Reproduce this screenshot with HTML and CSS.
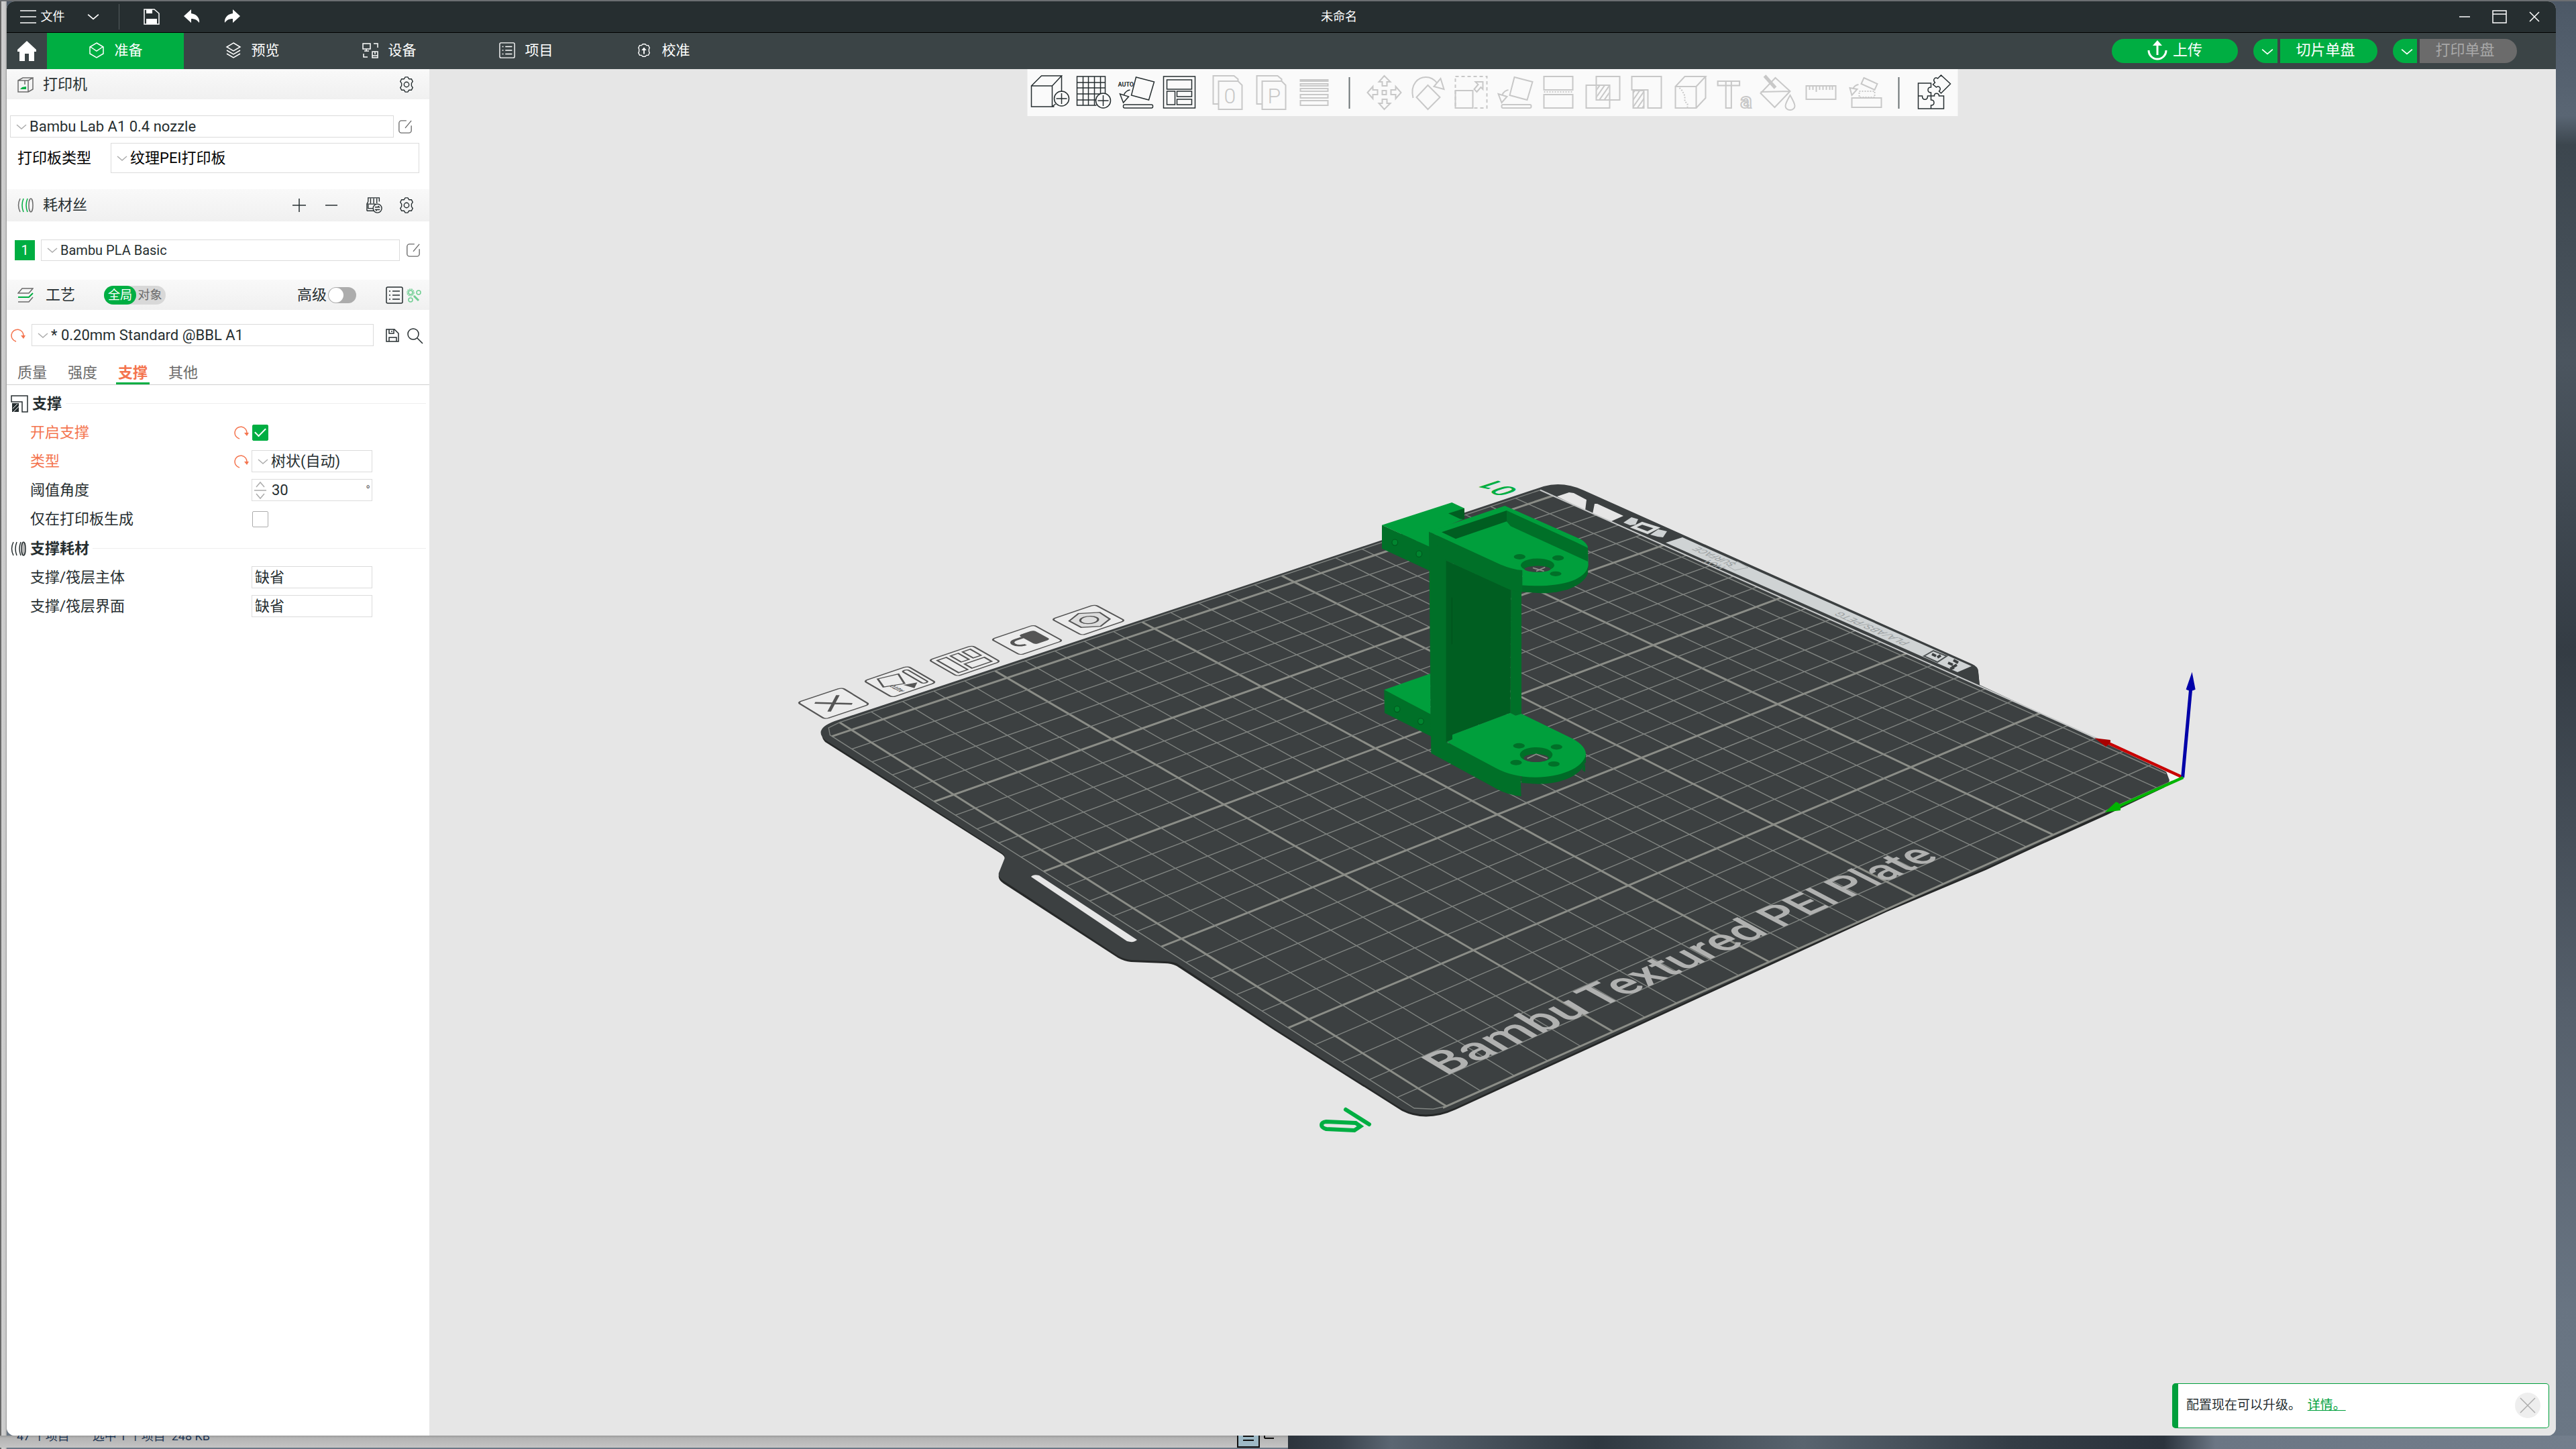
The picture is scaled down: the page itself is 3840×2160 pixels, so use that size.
FILE: index.html
```html
<!DOCTYPE html>
<html lang="zh-CN">
<head>
  <meta charset="UTF-8" />
  <meta name="viewport" content="width=device-width, initial-scale=1.0"/>
  <title>未命名</title>
  <link rel="stylesheet" href="styles.css">
</head>
<body>

  <!-- shared icons -->
  <svg class="defs" aria-hidden="true">
    <symbol id="i-down" viewBox="0 0 16 10"><path d="M1 2l7 6 7-6"/></symbol>
    <symbol id="i-gear" viewBox="0 0 26 26"><path d="M9 4l2-3h4l2 3 4 0 2 4-2 3v4l2 3-2 4-4 0-2 3h-4l-2-3-4 0-2-4 2-3v-4l-2-3 2-4z"/><circle cx="13" cy="13" r="4"/></symbol>
    <symbol id="i-edit" viewBox="0 0 24 24"><path d="M14 2H6a4 4 0 0 0-4 4v12a4 4 0 0 0 4 4h12a4 4 0 0 0 4-4v-8M22 2L12 14"/></symbol>
    <symbol id="i-reset" viewBox="0 0 22 22"><path d="M8 20A9 9 0 1 1 19 12"/><path class="solid" d="M15 11h7l-3 5z"/></symbol>
    <symbol id="i-list" viewBox="0 0 26 26"><rect x="1" y="1" width="24" height="24" rx="2"/><path d="M5 7h2M10 7h11M5 13h2M10 13h11M5 19h2M10 19h11"/></symbol>
    <symbol id="i-lay" viewBox="0 0 65 70"><path d="M31 12l27 7-8 27-26-7zM7 37l13 4-8 9zM22 31q-6 1-9 7"/><rect x="12" y="53" width="44" height="5" rx="2"/></symbol>
    <pattern id="hatch" width="6" height="6" patternUnits="userSpaceOnUse" patternTransform="rotate(35)"><path d="M1 0v6" stroke="#c8c8c8" stroke-width="2"/></pattern>
  </svg>

  <div class="window">
    <header class="titlebar">
      <button class="file"><svg class="icon" viewBox="0 0 24 24" stroke-width="2"><path d="M0 3h24M0 12h24M0 21h24"/></svg>文件</button>
      <button class="file-more" aria-label="更多"><svg class="icon small" stroke-width="2"><use href="#i-down"/></svg></button>
      <div class="quick">
        <button aria-label="保存"><svg class="icon" viewBox="0 0 24 24" stroke-width="2"><path d="M1 1h15l7 6v16H1z"/><path class="solid" d="M4 1h9v6H4zM4 15h16v8H4z"/></svg></button>
        <button aria-label="撤销"><svg class="icon" viewBox="0 0 24 24"><path class="solid" d="M0 11L11 1v6c9 1 13 8 12 14-3-4-6-6-12-6v6z"/></svg></button>
        <button aria-label="重做"><svg class="icon" viewBox="0 0 24 24"><path class="solid" d="M24 11L13 1v6C4 8 0 15 1 21c3-4 6-6 12-6v6z"/></svg></button>
      </div>
      <h1>未命名</h1>
      <div class="win-buttons">
        <button aria-label="最小化"><svg class="icon" viewBox="0 0 24 24"><path d="M4 12h16"/></svg></button>
        <button aria-label="最大化"><svg class="icon" viewBox="0 0 24 24" stroke-width="2"><path d="M2 3h20v18H2zM2 8h20"/></svg></button>
        <button aria-label="关闭"><svg class="icon" viewBox="0 0 24 24"><path d="M5 5l14 14M19 5L5 19"/></svg></button>
      </div>
    </header>

    <nav class="tabs">
      <a class="home" href="#home" aria-label="主页"><svg viewBox="0 0 30 30"><path class="solid" d="M15 0l14 13v3h-3v14h-8V19h-6v11H4V16H1v-3z"/></svg></a>
      <a class="tab active" href="#prepare"><svg class="icon" viewBox="0 0 24 24"><path d="M12 1l10 6v10l-10 6-10-6V7zM3 7l9 6 9-6"/></svg>准备</a>
      <a class="tab" href="#preview"><svg class="icon" viewBox="0 0 24 24"><path d="M12 1l10 6-10 6L2 7zM2 12l10 6 10-6M2 17l10 6 10-6"/></svg>预览</a>
      <a class="tab" href="#device"><svg class="icon" viewBox="0 0 24 24"><path d="M1 2h11v8H1zM6 10v3M3 13h7M17 2h6v6M2 17v5h6M15 14h8v9h-8zM19 14v4M15 20h8"/></svg>设备</a>
      <a class="tab" href="#project"><svg class="icon"><use href="#i-list"/></svg>项目</a>
      <a class="tab" href="#calibrate"><svg class="icon" viewBox="0 0 26 26"><path d="M9 5l2-2h4l2 2h3l2 4-1 2v4l1 2-2 4h-3l-2 2h-4l-2-2H6l-2-4 1-2v-4L4 9l2-4z"/><path class="solid" d="M12 19v-6H9l4-5 4 5h-3v6z"/></svg>校准</a>
      <div class="actions">
        <button class="upload"><svg viewBox="0 0 30 30" fill="none" stroke="currentColor" stroke-width="3"><path d="M2 15a13 13 0 0 0 26 0M15 22V6"/><path class="solid" stroke="none" d="M8 8l7-8 7 8z"/></svg>上传</button>
        <div class="split">
          <button class="caret" aria-label="切片选项"><svg class="icon small" stroke-width="2"><use href="#i-down"/></svg></button>
          <button class="main">切片单盘</button>
        </div>
        <div class="split">
          <button class="caret" aria-label="打印选项"><svg class="icon small" stroke-width="2"><use href="#i-down"/></svg></button>
          <button class="main" disabled>打印单盘</button>
        </div>
      </div>
    </nav>

    <div class="content">
      <aside class="sidebar">
        <div class="head">
          <svg class="icon" viewBox="0 0 24 24"><path d="M1 6h15v17H1zM1 6l7-4h15l-7 4M23 2v17l-7 4M11 6v6"/><path class="green" d="M4 19h9v-4l-6 1z"/></svg>
          <h2>打印机</h2>
          <button class="push" aria-label="打印机设置"><svg class="icon"><use href="#i-gear"/></svg></button>
        </div>
        <div class="printer">
          <div class="line">
            <div class="select wide"><svg class="arrow"><use href="#i-down"/></svg><select aria-label="打印机"><option>Bambu Lab A1 0.4 nozzle</option></select></div>
            <button class="gray" aria-label="编辑打印机"><svg class="icon edit"><use href="#i-edit"/></svg></button>
          </div>
          <div class="line plate-type">
            <label for="plate">打印板类型</label>
            <div class="select tall wide"><svg class="arrow"><use href="#i-down"/></svg><select id="plate"><option>纹理PEI打印板</option></select></div>
          </div>
        </div>

        <div class="head filament-head">
          <svg class="icon" viewBox="0 0 24 24"><path d="M4 2Q-1 12 4 22"/><path d="M9 2q-4 10 0 20M15 2q-4 10 0 20" stroke="#00ae42"/><ellipse cx="20" cy="12" rx="3" ry="10"/></svg>
          <h2>耗材丝</h2>
          <button class="push" aria-label="添加"><svg class="icon" viewBox="0 0 24 24"><path d="M12 2v20M2 12h20"/></svg></button>
          <button class="minus" aria-label="删除"><svg class="icon" viewBox="0 0 24 24"><path d="M3 12h18"/></svg></button>
          <button class="ams" aria-label="同步耗材"><svg class="icon" viewBox="0 0 26 26"><path d="M3 7V1h18v6M7 2v8M12 2v8M17 2v8M1 22V11h14M3 7L1 11M1 22h12M3 12v6h8"/><circle cx="18" cy="18" r="7"/><path d="M14 16h7l-2-2M22 20h-7l2 2"/></svg></button>
          <button aria-label="耗材设置"><svg class="icon"><use href="#i-gear"/></svg></button>
        </div>
        <div class="filament">
          <button class="swatch">1</button>
          <div class="select wide"><svg class="arrow"><use href="#i-down"/></svg><select aria-label="耗材"><option>Bambu PLA Basic</option></select></div>
          <button class="gray" aria-label="编辑耗材"><svg class="icon edit"><use href="#i-edit"/></svg></button>
        </div>

        <div class="head process-head">
          <svg class="icon" viewBox="0 0 24 24"><path d="M7 2h16l-6 7H1z"/><path d="M1 15h16l6-6" stroke="#00ae42" stroke-width="2"/><path d="M1 22h16l6-7"/></svg>
          <h2>工艺</h2>
          <div class="scope"><button class="on">全局</button><button>对象</button></div>
          <label class="push" for="advanced">高级</label>
          <input class="toggle" type="checkbox" id="advanced">
          <button class="compare" aria-label="列表"><svg class="icon big"><use href="#i-list"/></svg></button>
          <button class="wizard" aria-label="参数向导"><svg class="icon edit" viewBox="0 0 22 22"><circle cx="6" cy="7" r="5" stroke-dasharray="2 1"/><circle cx="6" cy="7" r="3"/><circle cx="18" cy="7" r="3"/><circle cx="6" cy="18" r="3"/><path d="M11 12l7 7" stroke-width="3"/></svg></button>
        </div>
        <div class="preset">
          <button class="reset" aria-label="重置"><svg class="icon"><use href="#i-reset"/></svg></button>
          <div class="select wide"><svg class="arrow"><use href="#i-down"/></svg><select aria-label="工艺预设"><option>* 0.20mm Standard @BBL A1</option></select></div>
          <button class="save" aria-label="保存预设"><svg class="icon" viewBox="0 0 24 24"><path d="M3 3h12l6 6v12H3zM7 3v6h7V3M11 5v2M7 21v-6h11v6"/></svg></button>
          <button class="find" aria-label="搜索"><svg class="icon big" viewBox="0 0 26 26"><circle cx="11" cy="11" r="8"/><path d="M17 17l8 8"/></svg></button>
        </div>

        <nav class="pages">
          <a href="#quality">质量</a>
          <a href="#strength">强度</a>
          <a href="#support" class="active">支撑</a>
          <a href="#others">其他</a>
        </nav>

        <h3><svg class="icon big dark" viewBox="0 0 26 26"><path d="M1 10V1h24v24h-8V10z"/><path class="solid" d="M2 12h10v13H2z"/><path d="M3 20l7-7M4 25l8-8" stroke="#fff" stroke-width="1"/></svg>支撑</h3>
        <div class="option changed">
          <label for="enable">开启支撑</label>
          <button class="reset" aria-label="重置"><svg class="icon"><use href="#i-reset"/></svg></button>
          <input type="checkbox" id="enable" checked>
        </div>
        <div class="option changed">
          <label for="type">类型</label>
          <button class="reset" aria-label="重置"><svg class="icon"><use href="#i-reset"/></svg></button>
          <div class="select"><svg class="arrow"><use href="#i-down"/></svg><select id="type"><option>树状(自动)</option></select></div>
        </div>
        <div class="option">
          <label for="angle">阈值角度</label>
          <div class="select"><svg class="spin" viewBox="0 0 18 28"><path d="M3 9l6-7 6 7M0 14h18M3 19l6 7 6-7"/></svg><input type="text" inputmode="numeric" id="angle" value="30"><span class="unit">°</span></div>
        </div>
        <div class="option">
          <label for="onplate">仅在打印板生成</label>
          <input type="checkbox" id="onplate">
        </div>
        <h3 class="second"><svg class="icon dark" viewBox="0 0 24 24"><path d="M4 2Q-1 12 4 22M9 2q-4 10 0 20M15 2q-4 10 0 20"/><ellipse cx="19" cy="12" rx="3" ry="10" fill="#bbb"/></svg>支撑耗材</h3>
        <div class="option">
          <label for="base">支撑/筏层主体</label>
          <div class="select plain"><select id="base"><option>缺省</option></select></div>
        </div>
        <div class="option">
          <label for="face">支撑/筏层界面</label>
          <div class="select plain"><select id="face"><option>缺省</option></select></div>
        </div>
      </aside>

      <main class="viewport">
        <div class="toolbar">
          <button aria-label="添加模型"><svg viewBox="0 0 65 70"><path d="M39 56H5V25h31v31M5 25l15-15h30L36 25M50 10v24M36 56l5-4"/><circle cx="50" cy="44" r="11"/><path d="M50 36v16M42 44h16"/></svg></button>
          <button aria-label="添加盘"><svg viewBox="0 0 65 70"><path d="M37 54H8V11h42v25M17 11v43M25 11v43M34 11v43M43 11v26M8 20h42M8 28h42M8 37h34M8 46h28"/><circle cx="47" cy="47" r="11"/><path d="M47 39v16M39 47h16"/></svg></button>
          <button aria-label="自动朝向"><svg viewBox="0 0 65 70"><use href="#i-lay"/><text x="4" y="26" class="auto">AUTO</text></svg></button>
          <button aria-label="自动摆盘"><svg viewBox="0 0 65 70"><path d="M7 11h47v47H7zM12 16h37v14H12zM12 33h12v20H12zM27 33h22v8H27zM27 45h22v8H27z"/></svg></button>
          <button class="gap" disabled aria-label="拆分为对象"><svg viewBox="0 0 65 70"><path d="M19 52h-8V10h31l6 5v3M19 18h29l6 6v36H19z"/><text x="27" y="51" class="thin">0</text></svg></button>
          <button disabled aria-label="拆分为零件"><svg viewBox="0 0 65 70"><path d="M19 52h-8V10h31l6 5v3M19 18h29l6 6v36H19z"/><text x="27" y="51" class="thin">P</text></svg></button>
          <button disabled aria-label="可变层高"><svg viewBox="0 0 65 70"><path d="M11 16h41v2H11zM11 22h41v3H11zM11 29h41v4H11zM11 38h41v5H11zM11 47h41v7H11z"/></svg></button>
          <span class="sep"></span>
          <button disabled aria-label="移动"><svg viewBox="0 0 65 70"><path d="M29 32h6v6h-6zM32 10l9 9h-5v6h-7v-6h-5zM32 60l9-9h-5v-6h-7v6h-5zM7 35l8-9v5h7v7h-7v6zM57 35l-8-9v5h-7v7h7v6z"/></svg></button>
          <button disabled aria-label="旋转"><svg viewBox="0 0 65 70"><path d="M32 24l18 18-18 18-17-18zM10 43C5 22 18 12 29 12q10 0 17 9M51 14l5 16-15-4z"/></svg></button>
          <button disabled aria-label="缩放"><svg viewBox="0 0 65 70"><path d="M8 32h26v26H8zM38 19h11v11l-3-3-6 7-4-4 6-7z"/><path d="M8 11h47v47H8z" stroke-dasharray="5 4"/></svg></button>
          <button disabled aria-label="底面选择"><svg><use href="#i-lay"/></svg></button>
          <button disabled aria-label="切割"><svg viewBox="0 0 65 70"><path d="M10 11h43v20H10zM10 38h43v20H10z"/><path d="M10 34h44" stroke-dasharray="2 2"/></svg></button>
          <button disabled aria-label="布尔"><svg viewBox="0 0 65 70"><path d="M23 11h35v35H23zM8 24h35v34H8z"/><path d="M24 25h18v20H24z" fill="url(#hatch)" stroke="none"/></svg></button>
          <button disabled aria-label="支撑绘制"><svg viewBox="0 0 65 70"><path d="M11 31V11h44v47H35V31z"/><path d="M13 32h16v26H13z" fill="url(#hatch)"/></svg></button>
          <button disabled aria-label="接缝绘制"><svg viewBox="0 0 65 70"><path d="M11 26h31v32H11zM11 26l14-15h31L42 26M56 11v32L42 58"/><path d="M17 28l4 4 4 8v8l4 4v6" stroke-dasharray="2 2"/></svg></button>
          <button disabled aria-label="文字"><svg viewBox="0 0 65 70"><text x="8" y="58" class="big-t">T<tspan class="small-a">a</tspan></text></svg></button>
          <button disabled aria-label="上色"><svg viewBox="0 0 65 70"><path d="M30 13l22 20-23 24L8 36zM8 34l44-1M52 39q7 12 7 16a7 6 0 0 1-14 0q0-4 7-16z"/><path d="M14 10l16 18" stroke-width="5"/></svg></button>
          <button disabled aria-label="测量"><svg viewBox="0 0 65 70"><path d="M11 25h44v20H11zM16 26v5M21 26v5M26 26v8M31 26v5M36 26v5M41 26v5M46 26v5M50 26v5"/></svg></button>
          <button disabled aria-label="装配"><svg viewBox="0 0 65 70"><path d="M14 43h44v14H14zM32 13l20 9-4 9-20-9zM11 28l11 2-8 9zM24 23q-6 1-8 6"/><path d="M25 33h23v9H25z" stroke-dasharray="2 2"/></svg></button>
          <span class="sep"></span>
          <button aria-label="装配视图"><svg viewBox="0 0 65 70"><path d="M28 27v-6H9v19h6c0 7 8 7 8 0h5v-5c-6 0-6-8 0-8zM9 40v19h38V40h-7c0-5-8-5-7 0h-5v6c6 0 6 8 0 8v5M43 9l-5 5c-4-3-8 2-4 6l-3 3 5 4c4-3 8 2 4 6l3 3 14-14z"/></svg></button>
        </div>

        <!-- scene coordinates are those of a 3840x2160 canvas -->
        <svg class="scene" viewBox="640 103 3170 2037" role="img" aria-label="热床">
          <g class="plate">
            <path class="rim" d="M1244 1077L1895 862 2301 727Q2330 719 2361 733L2940 992Q2949 996 2949 1003L2951 1023 3222 1149Q3244 1158 3226 1174L3140 1215 3040 1260 2960 1297 2813 1359 2170 1654Q2126 1674 2090 1656L1900 1536 1818 1482 1754 1440Q1746 1436 1736 1436L1686 1434Q1676 1433 1667 1428L1496 1317Q1487 1311 1489 1304L1497 1283Q1500 1278 1493 1273L1230 1106Q1216 1090 1244 1077Z"/>
            <path class="base" d="M1244 1075L1895 860 2301 725Q2330 717 2361 731L2940 990Q2949 994 2949 1001L2951 1021 3222 1147Q3244 1156 3226 1172L3140 1211 3040 1257 2960 1294 2813 1356 2170 1651Q2126 1671 2090 1653L1900 1533 1818 1478 1754 1436Q1746 1433 1736 1433L1686 1431Q1676 1430 1667 1425L1496 1313Q1487 1307 1489 1301L1497 1281Q1500 1276 1493 1271L1230 1103Q1212 1087 1244 1075Z"/>
            <path class="hole" d="M2321 740l18-6 7 1 19 10-2 16zM2377 751l4 0 39 18-18 8-28-11zM1537 1307q3-4 12-2l146 96q-5 5-15 2z"/>
            <path class="strip" d="M2483 809l25-8 431 192-21 9z"/>
            <path d="M2435 786l13-6 22 7-14 7z" fill="none" stroke="#d8dbdb" stroke-width="4"/>
            <path class="strip" d="M2420 779l12-8 10 3-4 8-8 1zM2460 797l12-8 13 3-6 9-8-1z"/>
            <path class="mark" d="M2868 978l14-8 20 8-14 9z"/>
            <path class="faint" d="M2576 844l14-7 16 9-20 4z"/>
            <path class="code" d="M2880 975l6 3M2888 980l5-3M2904 988l7 3M2912 984l7 4M2917 991l-7 4M2907 997l6-2"/>
          </g>
          <g id="grid"></g>
          <g id="labels"></g>

          <g class="plate-icons">
            <g transform="matrix(.66 -.22 .41 .25 1189 1047)"><rect width="100" height="100" rx="8"/><path d="M24 24l52 52M76 24L24 76" stroke-width="7"/></g>
            <g transform="matrix(.65 -.22 .42 .245 1288 1015)"><rect width="100" height="100" rx="8"/><path d="M25 10l42 8-15 45-39-14z"/><rect x="79" y="12" width="12" height="76" rx="6"/><path d="M50 70l20 6-14 14z" fill="#555"/><text transform="rotate(-90)" x="-92" y="34">AUTO</text></g>
            <g transform="matrix(.64 -.217 .42 .24 1385 984)"><rect width="100" height="100" rx="8"/><path d="M11 12h21v76H11zM42 12h18v38H42zM70 12h18v38H70zM42 62h46v26H42z"/></g>
            <g transform="matrix(.63 -.213 .43 .235 1478 953)"><rect width="100" height="100" rx="8"/><rect x="52" y="22" width="32" height="54" rx="5" fill="#555"/><path d="M52 34H34C14 34 14 66 36 66" stroke-width="8"/></g>
            <g transform="matrix(.64 -.217 .45 .24 1568 923)"><rect width="100" height="100" rx="8"/><path d="M20 29l33-16 33 23-3 38-33 16-30-21z" fill="#dcdcdc"/><circle cx="51" cy="51" r="17"/></g>
          </g>
          <path class="rename" d="M2006 1654l35 22M1977 1672q-7 1-7 5t7 6l42 2 9-6-7-5z"/>

          <!-- model -->
          <g transform="translate(1980 680) scale(.3333 .3571)">
            <path class="top" d="M240 288L553 193 609 218 600 264 460 320V382z"/>
            <path class="inner" d="M537 239l72-21v46l-20-2z"/>
            <path class="side" d="M240 288l218 92v100L240 386z"/>
            <path class="top" d="M250 975l208-68v175z"/>
            <path class="side" d="M250 975l210 103v92L252 1072z"/>
            <path class="side" d="M450 315l80 110v770l330 141 3 84q-60-5-108-30L460 1240z"/>
            <path class="inner" d="M527 436l290 120-3 516-259 91v19l-28 11z"/>
            <path class="side" d="M817 556h47v519l-26 8-24-11z"/>
            <path class="edge" d="M553 590v195" />
            <path class="curve" d="M1152 1245v33C1130 1330 1050 1369 940 1369L863 1364v-40zM1135 1310l14 8v-40z"/>
            <path class="top" d="M530 1193l25-11v-19l259-91 24 11 26-8 231 105q57 30 57 65c-10 60-120 95-222 96q-105-1-180-39z"/>
            <path class="curve" d="M1163 455l-2 35C1140 540 1060 572 950 572L860 566v-40z"/>
            <path class="side" d="M450 315l320 130 98 30v93q-45-5-73-18L527 436z"/>
            <path class="top" d="M450 315L790 207l340 140q31 18 31 36l2 72c-10 70-150 95-295 84v-63q-45-3-98-24z"/>
            <path class="inner" d="M507 317l291-90v45L570 345z"/>
            <path class="side" d="M798 227l312 133 51 23v57L815 292l-17-20z"/>
            <ellipse class="side" cx="936" cy="455" rx="75" ry="28"/><ellipse cx="936" cy="471" rx="58" ry="13" fill="#3c4041"/><path class="see" d="M915 466l50 14M930 480l40-16"/>
            <ellipse class="side" cx="930" cy="1246" rx="73" ry="31"/><ellipse cx="930" cy="1260" rx="56" ry="17" fill="#3c4041"/><path class="see" d="M890 1262l40-18 50 18"/>
            <g class="side"><ellipse cx="856" cy="420" rx="26" ry="11"/><ellipse cx="1028" cy="425" rx="26" ry="11"/><ellipse cx="1017" cy="491" rx="26" ry="10"/><ellipse cx="853" cy="1209" rx="26" ry="11"/><ellipse cx="1021" cy="1214" rx="26" ry="11"/><ellipse cx="840" cy="1279" rx="26" ry="11"/><ellipse cx="1009" cy="1285" rx="26" ry="11"/></g>
            <g class="screw"><circle cx="298" cy="360" r="13"/><circle cx="406" cy="408" r="13"/><circle cx="308" cy="1056" r="13"/><circle cx="414" cy="1107" r="13"/></g>
          </g>

          <!-- axes -->
          <g transform="translate(3040 960) scale(.3333)" stroke-width="13">
            <path d="M568 572l72 22-56 20z" fill="#f4f4f4"/>
            <path d="M643 597L310 444" stroke="#c80000"/><path d="M247 421l70 8q8 10-20 30z" fill="#a80000"/>
            <path d="M641 597l36-395" stroke="#0000a8" stroke-width="15"/><path d="M683 125l15 78q-20 12-42 0z" fill="#0000a8"/>
            <path d="M643 597L350 728" stroke="#00b400"/><path d="M293 752l50-46q26 8 20 38z" fill="#00b400"/>
          </g>
        </svg>

        <div class="toast">
          <p>配置现在可以升级。 <a href="#details">详情。</a></p>
          <button aria-label="关闭通知"><svg class="icon" viewBox="0 0 24 24"><path d="M1 1l22 22M23 1L1 23"/></svg></button>
        </div>
      </main>
    </div>
  </div>

  <footer class="explorer">
    <div class="status"><span>47 个项目</span><span>选中 1 个项目&nbsp; 248 KB</span><svg class="views" viewBox="0 0 64 20"><path class="box" d="M1 0h32v19H1z"/><path d="M9 3h16M9 9h16M41 0h14M41 6h14M41 0v6"/></svg></div>
  </footer>

  <script src="plate.js"></script>
</body>
</html>
```

FILE: styles.css
```css
* { box-sizing: border-box; margin: 0; padding: 0; }

body {
  height: 100vh;
  display: flex;
  flex-direction: column;
  padding: 2px 30px 0 10px;
  overflow: hidden;
  font-family: Roboto, "Noto Sans CJK SC", sans-serif;
  font-size: 22px;
  line-height: 28px;
  color: #262e30;
  background:
    linear-gradient(#6c6f72, #6c6f72) 0 0 / 100% 2px no-repeat,
    linear-gradient(90deg, #666 2px, #d0d0d0 2px, #c8c8c8 8px, #999 10px) 0 0 / 10px 100% no-repeat,
    linear-gradient(#4c5866, #5a6674 8%, #3c464e 10%, #4b555f 25%, #343c44 45%, #56606c 70%, #687482 90%, #6b7785);
}

button, select, input { font: inherit; color: inherit; border: none; background: none; }
button { display: flex; align-items: center; justify-content: center; cursor: pointer; }
a { color: inherit; text-decoration: none; }
h1, h2 { font-weight: normal; font-size: inherit; }

.defs { position: absolute; width: 0; height: 0; }
svg { display: block; flex: none; }
.solid { fill: currentColor; stroke: none; }
.icon { width: 24px; height: 24px; fill: none; stroke: currentColor; stroke-width: 1.5; }
.icon.small { width: 18px; height: 12px; }
.icon.edit { width: 22px; height: 22px; }
.icon.big { width: 26px; height: 26px; }
.icon.dark { color: #262e30; }
.green { fill: #00ae42; stroke: none; }

.window {
  flex: 1;
  min-height: 0;
  display: flex;
  flex-direction: column;
  border-radius: 12px;
  overflow: hidden;
  background: #e6e6e6;
}

/* title bar */
.titlebar {
  height: 47px;
  display: grid;
  grid-template-columns: 48px 60px 1fr auto 1fr;
  align-items: center;
  padding: 0 20px 0 18px;
  background: #262e30;
  border-bottom: 1px solid #000;
  color: #fff;
  font-size: 18px;
}
.titlebar .file { gap: 7px; width: 70px; }
.file-more { width: 40px; margin-left: 43px; }
.quick { display: flex; gap: 36px; margin-left: 41px; padding-left: 36px; border-left: 1px solid #555c5e; height: 38px; }
.titlebar h1 { font-size: 18px; margin-left: 66px; }
.win-buttons { display: flex; justify-content: flex-end; gap: 28px; }

/* main tabs */
.tabs { height: 54px; display: flex; background: #3b4446; color: #fff; font-size: 21px; }
.home { width: 60px; display: flex; align-items: center; justify-content: center; }
.home svg { width: 30px; height: 30px; }
.tab { width: 204px; display: flex; align-items: center; justify-content: center; gap: 15px; padding-bottom: 2px; }
.tab.active { background: #00ae42; }
.actions { margin-left: auto; display: flex; align-items: center; gap: 23px; padding-right: 58px; font-size: 22px; }
.actions button { height: 36px; background: #00ae42; padding-bottom: 2px; }
.upload { width: 188px; border-radius: 18px; gap: 8px; }
.upload svg { width: 30px; height: 30px; }
.split { display: flex; gap: 4px; }
.actions .caret { width: 36px; border-radius: 18px 0 0 18px; padding: 2px 0 0 6px; }
.actions .main { width: 145px; border-radius: 0 18px 18px 0; padding-right: 10px; }
.actions button:disabled { background: #6b6b6b; color: #a8a8a8; }

.content { flex: 1; min-height: 0; display: flex; }

/* left panel */
.sidebar { width: 630px; flex: none; background: #fff; }
.head {
  height: 45px;
  display: flex;
  align-items: center;
  padding: 0 22px 0 16px;
  background: linear-gradient(#f9f9f9, #f0f0f0);
}
.head > svg { color: #6b6b6b; }
.head h2 { margin-left: 14px; }
.push { margin-left: auto; }
.filament-head { height: 48px; }
.minus { margin: 0 40px 0 24px; }
.ams { margin-right: 24px; }

.select {
  display: flex;
  align-items: center;
  width: 180px;
  height: 33px;
  border: 1px solid #dbdbdb;
  background: #fff;
}
.select.wide { flex: 1; width: auto; }
.select.tall { height: 45px; }
.select select { appearance: none; flex: 1; min-width: 0; height: 100%; }
.select.plain { padding-left: 4px; }
.arrow { width: 16px; height: 10px; margin: 0 4px 0 8px; fill: none; stroke: #acacac; stroke-width: 1.5; }
.spin { width: 18px; height: 28px; margin: 0 8px 0 3px; fill: none; stroke: #acacac; stroke-width: 1.5; }
.unit { font-size: 18px; color: #6b6b6b; padding-right: 2px; }
.select input { flex: 1; min-width: 0; }

.printer { display: flex; flex-direction: column; gap: 8px; padding: 24px 15px 24px 5px; }
.line { display: flex; align-items: center; gap: 6px; }
.line .gray { margin-right: 10px; }
.gray { color: #6b6b6b; }
.plate-type { padding-left: 11px; gap: 29px; color: #000; }

.filament { display: flex; align-items: center; padding: 27px 13px 28px 12px; gap: 9px; font-size: 20px; }
.filament .select { height: 32px; }
.swatch { width: 30px; height: 30px; background: #00ae42; color: #fff; }

.process-head { padding-right: 12px; }
.process-head h2 { margin: 0 43px 0 18px; }
.scope { display: flex; height: 28px; border-radius: 14px; background: #d8d8d8; font-size: 18px; color: #6b6b6b; }
.scope button { width: 44px; border-radius: 14px; padding-right: 3px; }
.scope .on { background: #00ae42; color: #fff; width: 48px; padding: 0; }
.toggle { appearance: none; width: 42px; height: 24px; border-radius: 12px; background: #acacac; margin: 0 44px 0 2px; }
.toggle::before { content: ""; display: block; width: 22px; height: 22px; margin: 1px; border-radius: 50%; background: #fff; }
.wizard { color: #6fce92; margin-left: 5px; }

.preset { display: flex; align-items: center; padding: 21px 9px 0 6px; }
.reset { color: #f4744e; }
.reset svg { width: 22px; height: 22px; }
.preset .select { margin: 0 16px 0 9px; }
.find { margin-left: 8px; }

.pages { height: 58px; display: flex; align-items: flex-end; gap: 25px; padding-left: 13px; border-bottom: 1px solid #cecece; color: #6b6b6b; }
.pages a { width: 50px; text-align: center; border-bottom: 3px solid transparent; }
.pages .active { color: #f4744e; font-weight: bold; border-color: #00ae42; }

h3 { height: 43px; margin-top: 6px; display: flex; align-items: center; gap: 6px; padding: 0 5px 0 6px; font-size: 22px; }
h3::after { content: ""; flex: 1; border-top: 1px solid #eee; }
h3.second { margin-top: 1px; gap: 5px; }

.option { height: 43px; display: flex; align-items: center; padding-left: 35px; }
.option label { width: 330px; }
.option.changed label { width: 304px; color: #f4744e; }
.option.changed .reset { margin-right: 4px; }
.option > input { appearance: none; width: 24px; height: 24px; margin-left: 1px; border: 1px solid #acacac; border-radius: 2px; display: flex; align-items: center; justify-content: center; }
.option > input:checked { background: #00ae42; border-color: #00ae42; }
.option > input:checked::before { content: ""; width: 14px; height: 7px; margin-bottom: 4px; border: solid #fff; border-width: 0 0 2px 2px; transform: rotate(-45deg); }

/* 3D view */
.viewport { flex: 1; min-width: 0; position: relative; background: #e6e6e6; overflow: hidden; }
.scene { width: 100%; height: 100%; }
.toolbar {
  position: absolute;
  top: 0;
  left: 50%;
  transform: translateX(-50%);
  display: flex;
  align-items: center;
  height: 70px;
  padding: 0 3px 0 1px;
  background: #fafafa;
}
.toolbar svg { width: 65px; height: 70px; fill: none; stroke: currentColor; stroke-width: 1.5; overflow: visible; }
.toolbar button:disabled { color: #c8c8c8; }
.toolbar button:disabled svg { stroke-width: 2; }
.toolbar .gap { margin-left: 5px; }
.toolbar text { fill: currentColor; stroke: none; }
.auto { font-size: 9px; font-weight: bold; }
.thin { font-size: 32px; font-weight: 300; }
.toolbar .big-t { fill: none; stroke: currentColor; stroke-width: 2; font-size: 56px; font-weight: bold; }
.small-a { font-size: 32px; }
.sep { width: 2px; height: 47px; margin: 0 19px 0 18px; background: #6b7374; }

.rim { fill: #262828; }
.base { fill: #3c4041; }
.hole { fill: #e6e6e6; }
.strip { fill: #cfd3d4; }
.mark { fill: none; stroke: #4c5152; stroke-width: 2; }
.faint { fill: none; stroke: #aaafb0; stroke-width: 1; }
.code { stroke: #3c4041; stroke-width: 4; }
#grid { fill: none; stroke: #808481; }
.minor { stroke-width: 1.4; }
.major { stroke: #8b8d87; stroke-width: 3; }
.glow { stroke: #c6c8c8; stroke-width: 2; }
#labels { fill: #b0b1b0; font-family: Roboto, sans-serif; }
#labels .name { font-size: 14px; font-weight: 500; }
#labels .note { font-size: 4px; fill: #9da2a3; }
#labels .number { font-size: 11px; font-weight: 500; fill: #00ae42; }
.plate-icons { fill: none; stroke: #555; stroke-width: 4; }
.plate-icons rect:first-child { fill: #ececec; }
.plate-icons text { font-size: 15px; font-weight: bold; fill: #555; stroke: none; }
.rename { fill: none; stroke: #00ae42; stroke-width: 6; stroke-linecap: round; }
.top { fill: #009f3c; }
.side { fill: #007028; }
.inner { fill: #005e21; }
.curve { fill: #006a27; }
.edge { stroke: #004a1a; stroke-width: 2; }
.see { stroke: #8b8d87; stroke-width: 5; fill: none; }
.screw { fill: #00852f; stroke: #00551e; stroke-width: 3; }

.toast {
  position: absolute;
  right: 10px;
  bottom: 11px;
  width: 562px;
  height: 67px;
  display: flex;
  align-items: center;
  justify-content: space-between;
  padding: 0 12px 2px 12px;
  border: 1px solid #009f3c;
  border-left-width: 9px;
  border-radius: 5px;
  background: #fff;
  font-size: 19px;
}
.toast a { color: #009f3c; text-decoration: underline; margin-left: 5px; }
.toast button { width: 38px; height: 38px; border-radius: 50%; background: #eee; color: #acacac; }

/* file manager showing below the window */
.explorer { height: 20px; margin: 0 -30px 0 -10px; overflow: hidden; background: linear-gradient(90deg, transparent 50%, #2c343c 50%, #39424c 52%, #5b6672 54%, #2f3840 62%, #59646f 70%, #343d46 78%, #2b333d 84%, #6b7684 86%, #737e8c); }
.status { width: 50%; height: 18px; display: flex; align-items: flex-end; gap: 34px; padding: 0 12px 0 25px; background: linear-gradient(#999, #b4b4b4 20%, #c4c4c4); color: #1d3552; font-size: 18px; overflow: hidden; }
.status span { height: 31px; }
.views { width: 64px; height: 20px; margin-left: auto; stroke: #111; stroke-width: 2; fill: none; }
.views .box { fill: #9db9c6; }
```

FILE: plate.js
```js
const NS = 'http://www.w3.org/2000/svg';

// corners of the 250mm square on screen: (0,0) (250,0) (250,250) (0,250)
const [p0, p1, p2, p3] = [[3254, 1158], [2315, 739], [1269, 1088], [2156, 1649]];

const dx1 = p1[0] - p2[0], dy1 = p1[1] - p2[1];
const dx2 = p3[0] - p2[0], dy2 = p3[1] - p2[1];
const sx = p0[0] - p1[0] + p2[0] - p3[0];
const sy = p0[1] - p1[1] + p2[1] - p3[1];
const det = dx1 * dy2 - dx2 * dy1;
const g = (sx * dy2 - dx2 * sy) / det;
const h = (dx1 * sy - sx * dy1) / det;

// plate millimetres -> screen
function project(u, v) {
  u /= 250;
  v /= 250;
  const w = g * u + h * v + 1;
  return [0, 1].map(i =>
    ((p1[i] - p0[i] + g * p1[i]) * u + (p3[i] - p0[i] + h * p3[i]) * v + p0[i]) / w);
}

function path(points, className) {
  const el = document.createElementNS(NS, 'path');
  el.setAttribute('d', 'M' + points.map(([u, v]) => project(u, v).map(n => n.toFixed(1)).join(' ')).join('L'));
  el.setAttribute('class', className);
  document.getElementById('grid').appendChild(el);
}

const EDGE = 256;
for (let i = 10; i <= 250; i += 10) {
  const kind = i % 50 === 0 ? 'major' : 'minor';
  path([[i, 0], [i, EDGE]], kind);
  path([[0, i], [EDGE, i]], kind);
}
path([[0, 250], [1, 253], [4, 256], [251, 256], [255, 254], [256, 250], [256, 0]], 'minor');
path([[4, 0], [256, 0]], 'glow');
path([[4, 2], [210, 2]], 'minor');
path([[0, 4], [0, 251]], 'major');

// flat lettering, along the front edge or (side = true) along the side edge
function label(text, u, v, className, side) {
  const [x, y] = project(u, v);
  const [ux, uy] = project(u + 1, v).map((n, i) => n - [x, y][i]);
  const [vx, vy] = project(u, v + 1).map((n, i) => n - [x, y][i]);
  const m = side ? [ux, uy, -vx, -vy] : [-vx, -vy, -ux, -uy];
  const el = document.createElementNS(NS, 'text');
  el.setAttribute('transform', `matrix(${[...m, x, y].map(n => n.toFixed(3)).join(' ')})`);
  el.setAttribute('text-anchor', 'middle');
  el.setAttribute('class', className);
  el.textContent = text;
  document.getElementById('labels').appendChild(el);
}

label('Bambu', 10, 220, 'name');
label('Textured', 10, 168, 'name');
label('PEI', 10, 126, 'name');
label('Plate', 10, 97, 'name');
label('PLA/ABS/PETG', 118, -6, 'note', true);
label('HOT', 180, -3, 'note', true);
label('SURFACE', 184, -7, 'note', true);
label('01', 266, 5, 'number', true);
```
